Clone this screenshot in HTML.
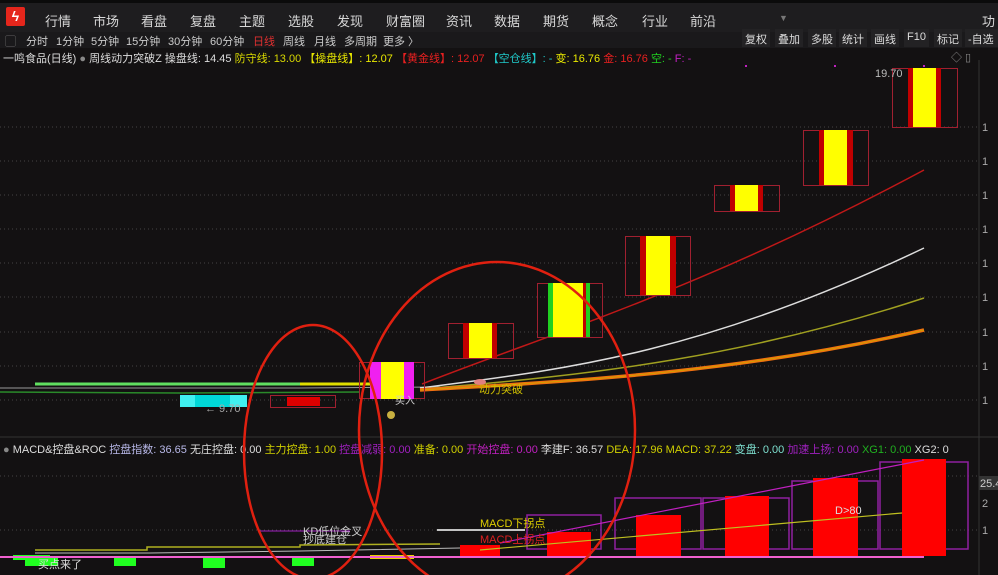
<!DOCTYPE html>
<html><head><meta charset="utf-8"><style>
*{margin:0;padding:0;box-sizing:border-box}
body{width:998px;height:575px;background:#131112;overflow:hidden;font-family:"Liberation Sans","Noto Sans CJK SC",sans-serif;position:relative;color:#ccc}
.top{position:absolute;left:0;top:0;width:998px;height:32px;background:#1e1d1f;border-top:3px solid #0b0b0b}
.top span{position:absolute;top:8px;font-size:13px;color:#d8d8d8}
.bar2{position:absolute;top:32px;left:0;width:998px;height:16px;background:#1a191b;font-size:11px}
.bar2 span{position:absolute;top:1px;color:#ccc}
.btn{position:absolute;top:29px;height:18px;font-size:11px;color:#ddd;background:#232224;padding:2px 3px;white-space:nowrap}
.t{position:absolute;font-size:11px;white-space:nowrap}
</style></head><body>
<div class="top">
<div style="position:absolute;left:6px;top:4px;width:19px;height:19px;background:#e5261c;border-radius:2px;color:#fff;font-size:14px;text-align:center;line-height:19px;font-weight:bold">ϟ</div>
<span style="left:45px">行情</span><span style="left:93px">市场</span><span style="left:141px">看盘</span><span style="left:190px">复盘</span><span style="left:239px">主题</span><span style="left:288px">选股</span><span style="left:337px">发现</span><span style="left:386px">财富圈</span><span style="left:446px">资讯</span><span style="left:494px">数据</span><span style="left:543px">期货</span><span style="left:592px">概念</span><span style="left:642px">行业</span><span style="left:690px">前沿</span><span style="left:779px;font-size:9px;top:10px;color:#777">▼</span><span style="left:982px">功</span>
</div>
<div class="bar2">
<span style="left:5px;color:#777">▢</span><span style="left:26px">分时</span><span style="left:56px">1分钟</span><span style="left:91px">5分钟</span><span style="left:126px">15分钟</span><span style="left:168px">30分钟</span><span style="left:210px">60分钟</span><span style="left:253px;color:#e03030">日线</span><span style="left:283px">周线</span><span style="left:314px">月线</span><span style="left:344px">多周期</span><span style="left:383px">更多 〉</span>
</div>
<div class="btn" style="left:742px">复权</div><div class="btn" style="left:775px">叠加</div><div class="btn" style="left:808px">多股</div><div class="btn" style="left:839px">统计</div><div class="btn" style="left:871px">画线</div><div class="btn" style="left:904px">F10</div><div class="btn" style="left:934px">标记</div><div class="btn" style="left:965px;width:33px">-自选</div>
<div class="t" style="left:3px;top:50px;color:#ddd">一鸣食品(日线) <span style="color:#888">●</span> 周线动力突破Z 操盘线: 14.45 <span style="color:#d8d800">防守线: 13.00</span> <span style="color:#e8e800">【操盘线】: 12.07</span> <span style="color:#e82020">【黄金线】: 12.07</span> <span style="color:#20c8c8">【空仓线】: -</span> <span style="color:#e8e800">变: 16.76</span> <span style="color:#e82020">金: 16.76</span> <span style="color:#20d020">空: -</span> <span style="color:#c020c0">F: -</span></div>
<div class="t" style="left:951px;top:49px;color:#888">◇ ▯</div>
<div class="t" style="left:3px;top:441px;color:#ddd"><span style="color:#888">●</span> MACD&amp;控盘&amp;ROC <span style="color:#b8b8e8">控盘指数: 36.65</span> 无庄控盘: 0.00 <span style="color:#d0d000">主力控盘: 1.00</span> <span style="color:#a020c0">控盘减弱: 0.00</span> <span style="color:#d0d000">准备: 0.00</span> <span style="color:#c020c0">开始控盘: 0.00</span> 李建F: 36.57 <span style="color:#d0d000">DEA: 17.96 MACD: 37.22</span> <span style="color:#7ee0d0">变盘: 0.00</span> <span style="color:#a020c0">加速上扬: 0.00</span> <span style="color:#20b020">XG1: 0.00</span> XG2: 0</div>
<svg width="998" height="575" style="position:absolute;left:0;top:0" xmlns="http://www.w3.org/2000/svg">
<g stroke="#444" stroke-dasharray="1 3">
<line x1="0" y1="127" x2="979" y2="127"/><line x1="0" y1="161" x2="979" y2="161"/><line x1="0" y1="195" x2="979" y2="195"/><line x1="0" y1="229" x2="979" y2="229"/><line x1="0" y1="263" x2="979" y2="263"/><line x1="0" y1="297" x2="979" y2="297"/><line x1="0" y1="332" x2="979" y2="332"/><line x1="0" y1="366" x2="979" y2="366"/><line x1="0" y1="400" x2="979" y2="400"/>
<line x1="0" y1="476" x2="979" y2="476"/><line x1="0" y1="530" x2="979" y2="530"/></g>
<line x1="979" y1="60" x2="979" y2="575" stroke="#333"/>
<line x1="0" y1="437" x2="998" y2="437" stroke="#333"/>
<g fill="#aaa" font-size="11"><text x="982" y="131">1</text><text x="982" y="165">1</text><text x="982" y="199">1</text><text x="982" y="233">1</text><text x="982" y="267">1</text><text x="982" y="301">1</text><text x="982" y="336">1</text><text x="982" y="370">1</text><text x="982" y="404">1</text><text x="982" y="534">1</text><text x="982" y="507">2</text></g>
<rect x="979" y="476" width="19" height="14" fill="#333"/><text x="980" y="487" fill="#ccc" font-size="11">25.4</text>
<path d="M0 392 L180 393 L360 392" stroke="#2a8a2a" stroke-width="1.5" fill="none"/>
<path d="M35 384 L300 384" stroke="#60e060" stroke-width="3" fill="none"/>
<path d="M300 384 L370 384" stroke="#e0e000" stroke-width="3" fill="none"/>
<path d="M0 388 L300 388 L440 387" stroke="#999" stroke-width="1" fill="none"/>
<path d="M422 384 C560 330 700 290 924 170" stroke="#c01818" stroke-width="1.5" fill="none"/>
<path d="M420 388 C560 370 700 355 924 248" stroke="#ddd" stroke-width="1.5" fill="none"/>
<path d="M420 389 C600 375 750 355 924 298" stroke="#a0a020" stroke-width="1.5" fill="none"/>
<path d="M420 390 C600 380 750 370 924 330" stroke="#f07010" stroke-width="3.5" fill="none"/>
<path d="M420 390 C600 380 750 370 924 330" stroke="#d0a000" stroke-width="1" fill="none"/>
<rect x="180" y="395" width="67" height="12" fill="#40f0f0"/><rect x="195" y="395" width="35" height="12" fill="#00d8d8"/>
<text x="205" y="412" fill="#aaa" font-size="11">← 9.70</text>
<rect x="270.5" y="395.5" width="65" height="12" fill="none" stroke="#a02030"/><rect x="287" y="397" width="33" height="9" fill="#e00000"/>
<g fill="none" stroke="#a02030"><rect x="359.5" y="362.5" width="65" height="36"/><rect x="448.5" y="323.5" width="65" height="35"/><rect x="537.5" y="283.5" width="65" height="54"/><rect x="625.5" y="236.5" width="65" height="59"/><rect x="714.5" y="185.5" width="65" height="26"/><rect x="803.5" y="130.5" width="65" height="55"/><rect x="892.5" y="68.5" width="65" height="59"/></g>
<rect x="370" y="362" width="44" height="37" fill="#f020f0"/><rect x="381" y="362" width="23" height="37" fill="#ffff00"/>
<rect x="463" y="323" width="34" height="35" fill="#c00000"/><rect x="469" y="323" width="23" height="35" fill="#ffff00"/>
<rect x="548" y="283" width="42" height="54" fill="#20d020"/><rect x="553" y="283" width="30" height="54" fill="#ffff00"/><rect x="583" y="283" width="3" height="54" fill="#c00000"/>
<rect x="640" y="236" width="36" height="59" fill="#c00000"/><rect x="646" y="236" width="24" height="59" fill="#ffff00"/>
<rect x="730" y="185" width="33" height="26" fill="#c00000"/><rect x="735" y="185" width="23" height="26" fill="#ffff00"/>
<rect x="819" y="130" width="34" height="55" fill="#c00000"/><rect x="824" y="130" width="23" height="55" fill="#ffff00"/>
<rect x="908" y="68" width="33" height="59" fill="#c00000"/><rect x="913" y="68" width="23" height="59" fill="#ffff00"/>
<text x="875" y="77" fill="#bbb" font-size="11">19.70</text>
<g fill="#c020c0"><rect x="745" y="65" width="2" height="2"/><rect x="834" y="65" width="2" height="2"/><rect x="923" y="65" width="2" height="2"/></g>
<ellipse cx="480" cy="382" rx="6" ry="3" fill="#e08080"/>
<text x="479" y="393" fill="#d0c000" font-size="11">动力突破</text>
<text x="395" y="404" fill="#ccc" font-size="10">买入</text>
<circle cx="391" cy="415" r="4" fill="#c8b040"/>
<path d="M35 550 L147 550 L147 547 L300 547 L300 545 L440 544" stroke="#b0b020" stroke-width="1.5" fill="none"/>
<path d="M35 553 L150 553 L300 551 L460 548" stroke="#bbb" stroke-width="1" fill="none"/>
<path d="M260 531 L350 531" stroke="#a020c0"/>
<text x="303" y="535" fill="#ccc" font-size="11">KD低位金叉</text><text x="303" y="543" fill="#ccc" font-size="11">抄底建仓</text>
<g fill="#20ff20"><rect x="13" y="555" width="37" height="5"/><rect x="25" y="556" width="33" height="10"/><rect x="114" y="556" width="22" height="10"/><rect x="203" y="556" width="22" height="12"/><rect x="292" y="556" width="22" height="10"/></g>
<rect x="370" y="555" width="44" height="4" fill="#e8d000"/>
<text x="38" y="568" fill="#ddd" font-size="11">买点来了</text>
<g fill="none" stroke="#9020a0" stroke-width="1.5"><rect x="527" y="515" width="74" height="34"/><rect x="615" y="498" width="86" height="51"/><rect x="703" y="498" width="86" height="51"/><rect x="792" y="481" width="86" height="68"/><rect x="880" y="462" width="88" height="87"/></g>
<g fill="#ff0000"><rect x="460" y="545" width="40" height="11"/><rect x="547" y="532" width="44" height="24"/><rect x="636" y="515" width="45" height="41"/><rect x="725" y="496" width="44" height="60"/><rect x="813" y="478" width="45" height="78"/><rect x="902" y="459" width="44" height="97"/></g>
<path d="M500 543 L924 460" stroke="#c020c0" stroke-width="1.2"/>
<path d="M480 550 L902 513" stroke="#c0c020" stroke-width="1.2"/>
<line x1="0" y1="557" x2="924" y2="557" stroke="#f060d0" stroke-width="2"/>
<line x1="437" y1="530" x2="525" y2="530" stroke="#fff" stroke-width="1.5"/>
<text x="480" y="527" fill="#e0d000" font-size="11">MACD下拐点</text><text x="480" y="543" fill="#e02020" font-size="11">MACD上拐点</text>
<text x="835" y="514" fill="#ddd" font-size="11">D&gt;80</text>
<ellipse cx="313" cy="452" rx="69" ry="127" fill="none" stroke="#e02010" stroke-width="2.5"/>
<ellipse cx="497" cy="430" rx="138" ry="168" fill="none" stroke="#e02010" stroke-width="2.5"/>
</svg>
</body></html>
